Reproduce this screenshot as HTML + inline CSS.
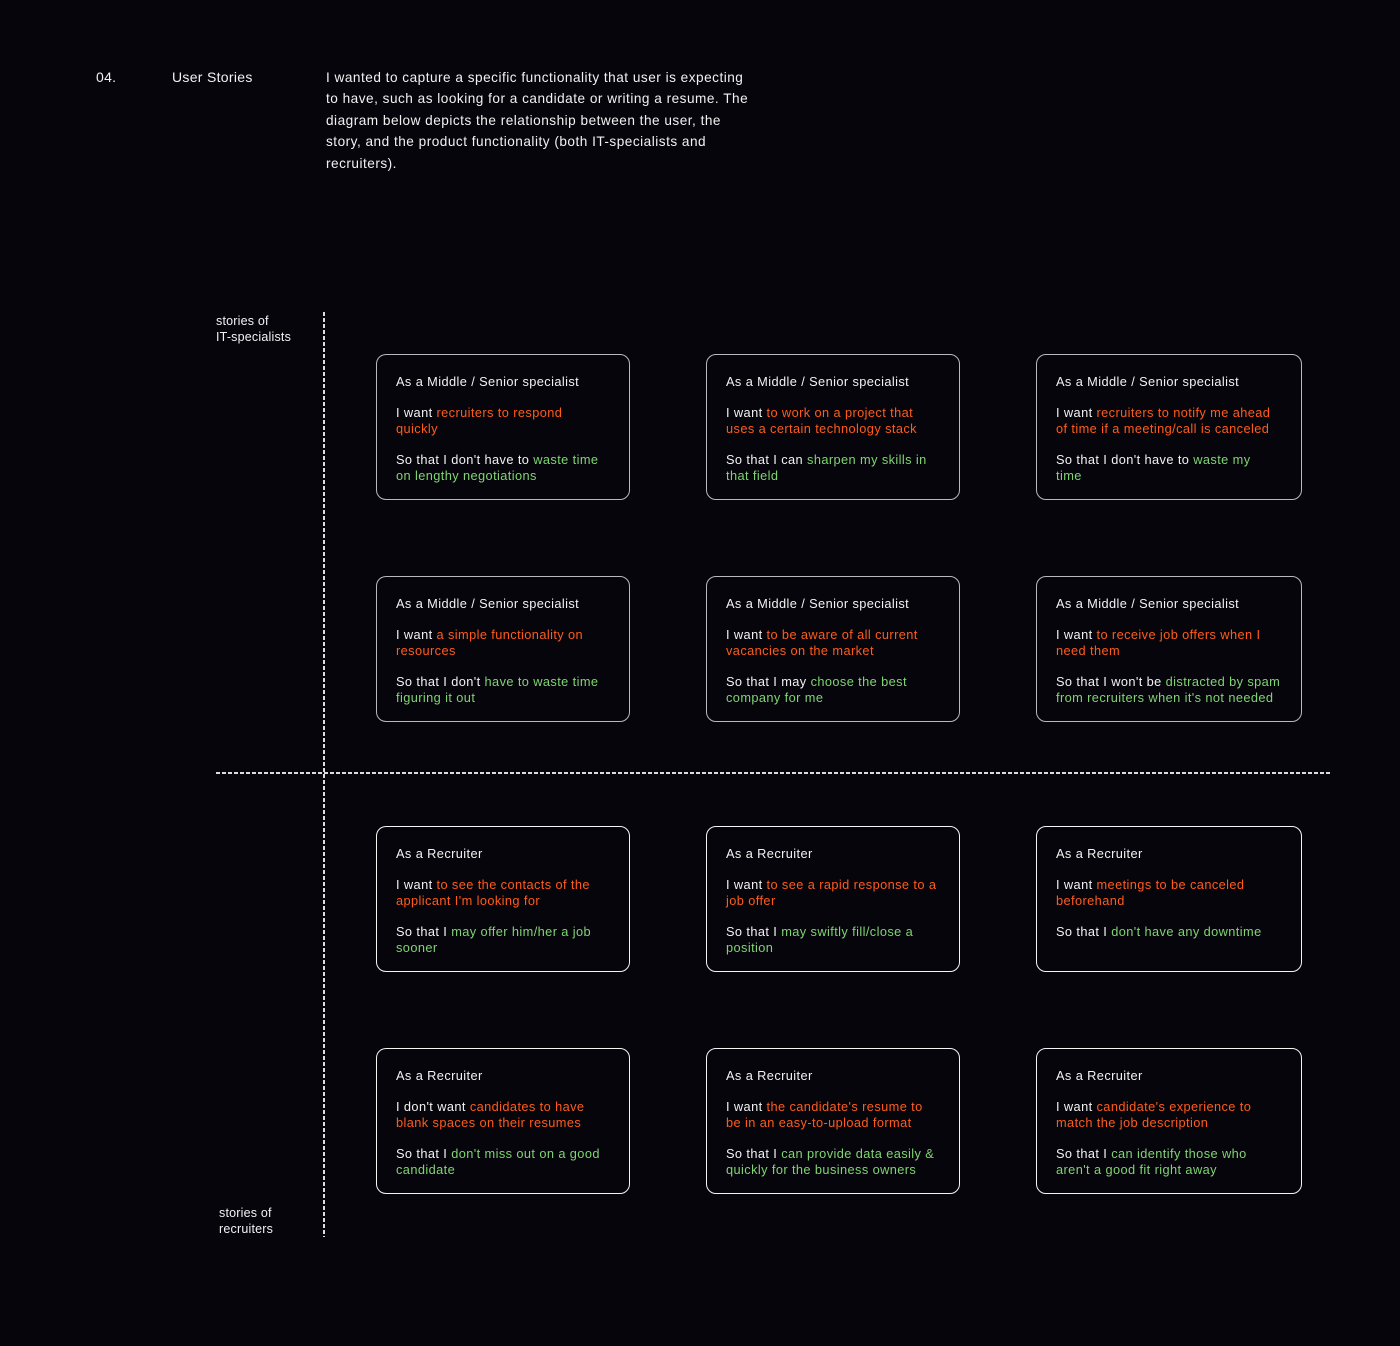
<!DOCTYPE html>
<html><head><meta charset="utf-8"><style>
body{margin:0;width:1400px;height:1346px;background:#06050b;color:#f2f2f2;font-family:"Liberation Sans",sans-serif;position:relative;overflow:hidden}
.a{position:absolute}
.h{font-size:14px;top:69px;letter-spacing:0.3px}
.intro{left:326px;top:67px;font-size:13.6px;line-height:21.4px;width:460px;letter-spacing:0.5px}
.lab{font-size:12.5px;line-height:16px;letter-spacing:0.2px}
.c{position:absolute;box-sizing:border-box;border:1.5px solid #b9b9bd;border-radius:10px;padding:19px 0 0 19px;font-size:12.8px;line-height:15.7px;letter-spacing:0.4px}
.r .c{border-color:#f4f4f4}
.c p{margin:0 0 15.5px}
.o{color:#ff5b1c}.g{color:#7fd572}
.vl{position:absolute;left:323px;top:312px;width:2px;height:925px;background:repeating-linear-gradient(#ddd 0 4px,transparent 4px 6px)}
.hl{position:absolute;left:216px;top:772px;width:1114px;height:2px;background:repeating-linear-gradient(90deg,#ddd 0 4px,transparent 4px 6px)}
</style></head><body>
<div class="a h" style="left:96px">04.</div>
<div class="a h" style="left:172px">User Stories</div>
<div class="a intro">I wanted to capture a specific functionality that user is expecting<br>to have, such as looking for a candidate or writing a resume. The<br>diagram below depicts the relationship between the user, the<br>story, and the product functionality (both IT-specialists and<br>recruiters).</div>
<div class="a lab" style="left:216px;top:313px">stories of<br>IT-specialists</div>
<div class="a lab" style="left:219px;top:1205px">stories of<br>recruiters</div>
<div class="vl"></div><div class="hl"></div>
<div>
<div class="c" style="left:376px;top:354px;width:254px;height:146px"><p>As a Middle / Senior specialist</p><p>I want <span class="o">recruiters to respond<br>quickly</span></p><p>So that I don't have to <span class="g">waste time<br>on lengthy negotiations</span></p></div>
<div class="c" style="left:706px;top:354px;width:254px;height:146px"><p>As a Middle / Senior specialist</p><p>I want <span class="o">to work on a project that<br>uses a certain technology stack</span></p><p>So that I can <span class="g">sharpen my skills in<br>that field</span></p></div>
<div class="c" style="left:1036px;top:354px;width:266px;height:146px"><p>As a Middle / Senior specialist</p><p>I want <span class="o">recruiters to notify me ahead<br>of time if a meeting/call is canceled</span></p><p>So that I don't have to <span class="g">waste my<br>time</span></p></div>
<div class="c" style="left:376px;top:576px;width:254px;height:146px"><p>As a Middle / Senior specialist</p><p>I want <span class="o">a simple functionality on<br>resources</span></p><p>So that I don't <span class="g">have to waste time<br>figuring it out</span></p></div>
<div class="c" style="left:706px;top:576px;width:254px;height:146px"><p>As a Middle / Senior specialist</p><p>I want <span class="o">to be aware of all current<br>vacancies on the market</span></p><p>So that I may <span class="g">choose the best<br>company for me</span></p></div>
<div class="c" style="left:1036px;top:576px;width:266px;height:146px"><p>As a Middle / Senior specialist</p><p>I want <span class="o">to receive job offers when I<br>need them</span></p><p>So that I won't be <span class="g">distracted by spam<br>from recruiters when it's not needed</span></p></div>
</div>
<div class="r">
<div class="c" style="left:376px;top:826px;width:254px;height:146px"><p>As a Recruiter</p><p>I want <span class="o">to see the contacts of the<br>applicant I'm looking for</span></p><p>So that I <span class="g">may offer him/her a job<br>sooner</span></p></div>
<div class="c" style="left:706px;top:826px;width:254px;height:146px"><p>As a Recruiter</p><p>I want <span class="o">to see a rapid response to a<br>job offer</span></p><p>So that I <span class="g">may swiftly fill/close a<br>position</span></p></div>
<div class="c" style="left:1036px;top:826px;width:266px;height:146px"><p>As a Recruiter</p><p>I want <span class="o">meetings to be canceled<br>beforehand</span></p><p>So that I <span class="g">don't have any downtime</span></p></div>
<div class="c" style="left:376px;top:1048px;width:254px;height:146px"><p>As a Recruiter</p><p>I don't want <span class="o">candidates to have<br>blank spaces on their resumes</span></p><p>So that I <span class="g">don't miss out on a good<br>candidate</span></p></div>
<div class="c" style="left:706px;top:1048px;width:254px;height:146px"><p>As a Recruiter</p><p>I want <span class="o">the candidate's resume to<br>be in an easy-to-upload format</span></p><p>So that I <span class="g">can provide data easily &amp;<br>quickly for the business owners</span></p></div>
<div class="c" style="left:1036px;top:1048px;width:266px;height:146px"><p>As a Recruiter</p><p>I want <span class="o">candidate's experience to<br>match the job description</span></p><p>So that I <span class="g">can identify those who<br>aren't a good fit right away</span></p></div>
</div>
</body></html>
